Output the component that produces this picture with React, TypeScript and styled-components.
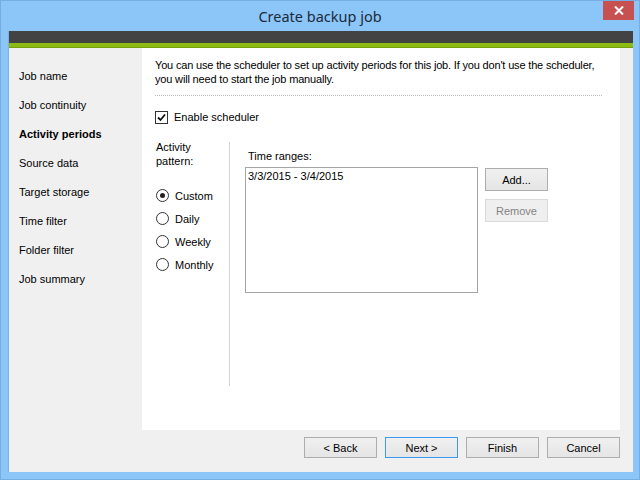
import styled, { createGlobalStyle, css } from 'styled-components';

const GlobalStyle = createGlobalStyle`
    html, body {
        margin: 0;
        padding: 0;
        width: 640px;
        height: 480px;
        overflow: hidden;
    }
    body {
        font-family: 'Liberation Sans', Arial, sans-serif;
        font-size: 11px;
        color: #000;
    }
`;

const Window = styled.div`
    box-sizing: border-box;
    width: 640px;
    height: 480px;
    background: #8cc6f8;
    border: 1px solid #74aee2;
    display: flex;
    flex-direction: column;
`;

const TitleBar = styled.div`
    position: relative;
    height: 30px;
    display: flex;
    align-items: center;
    justify-content: center;
    font-family: 'Noto Sans', 'Open Sans', sans-serif;
    font-size: 14.5px;
    color: #1b2a3a;
`;

const CloseButton = styled.div`
    position: absolute;
    top: 0;
    right: 5px;
    width: 31px;
    height: 19px;
    background: #c75050;
    display: flex;
    align-items: center;
    justify-content: center;
`;

const Client = styled.div`
    flex: 1;
    margin: 0 6px 7px 7px;
    border-left: 1px solid #79b2e6;
    display: flex;
    flex-direction: column;
    background: #f0f0f0;
`;

const DarkBand = styled.div`
    height: 12px;
    background: #434343;
`;

const GreenBand = styled.div`
    height: 4px;
    background: #8dbb14;
    border-bottom: 1px solid #76a00e;
`;

const Main = styled.div`
    flex: 1;
    display: flex;
    min-height: 0;
`;

const Sidebar = styled.div`
    width: 133px;
    padding: 14px 0 0 10px;
    box-sizing: border-box;
    display: flex;
    flex-direction: column;
`;

const NavItem = styled.div<{ $active?: boolean }>`
    height: 29px;
    line-height: 29px;
    ${({ $active }) =>
        $active &&
        css`
            font-weight: bold;
        `}
`;

const Content = styled.div`
    width: 478px;
    background: #fff;
    padding: 10px 18px 0 13px;
    box-sizing: border-box;
    display: flex;
    flex-direction: column;
`;

const Intro = styled.p`
    margin: 0;
    line-height: 14px;
    letter-spacing: -0.17px;
`;

const Separator = styled.div`
    margin-top: 9px;
    border-top: 1px dotted #b8b8b8;
`;

const CheckRow = styled.label`
    display: flex;
    align-items: center;
    gap: 6px;
    margin-top: 14px;
    height: 14px;
`;

const CheckBox = styled.span`
    width: 11px;
    height: 11px;
    border: 1px solid #333;
    background: #fff;
    display: flex;
    align-items: center;
    justify-content: center;
`;

const Schedule = styled.div`
    display: flex;
    margin-top: 18px;
`;

const PatternColumn = styled.div`
    width: 75px;
    height: 244px;
    border-right: 1px solid #d4d4d4;
    padding-left: 1px;
    box-sizing: border-box;
`;

const PatternLabel = styled.div`
    line-height: 14px;
    margin-top: -2px;
`;

const RadioList = styled.div`
    margin-top: 16px;
    display: flex;
    flex-direction: column;
`;

const RadioRow = styled.label`
    display: flex;
    align-items: center;
    gap: 6px;
    height: 23px;
`;

const RadioCircle = styled.span<{ $checked?: boolean }>`
    width: 11px;
    height: 11px;
    border: 1px solid #333;
    border-radius: 50%;
    background: #fff;
    display: flex;
    align-items: center;
    justify-content: center;

    ${({ $checked }) =>
        $checked &&
        css`
            &::after {
                content: '';
                width: 5px;
                height: 5px;
                border-radius: 50%;
                background: #222;
            }
        `}
`;

const RangesColumn = styled.div`
    padding-left: 15px;
    display: flex;
    flex-direction: column;
`;

const RangesLabel = styled.div`
    line-height: 14px;
    margin: 7px 0 4px 3px;
`;

const RangesRow = styled.div`
    display: flex;
    gap: 7px;
    align-items: flex-start;
`;

const ListBox = styled.div`
    width: 233px;
    height: 126px;
    box-sizing: border-box;
    border: 1px solid #a5a5a5;
    padding: 1px 2px;
    line-height: 14px;
`;

const ButtonStack = styled.div`
    display: flex;
    flex-direction: column;
    gap: 8px;
    padding-top: 1px;
`;

const Button = styled.button<{ $primary?: boolean; $width?: number; $height?: number }>`
    width: ${({ $width }) => $width ?? 73}px;
    height: ${({ $height }) => $height ?? 21}px;
    box-sizing: border-box;
    font-family: 'Liberation Sans', Arial, sans-serif;
    font-size: 11px;
    color: #000;
    border: 1px solid ${({ $primary }) => ($primary ? '#3c9af0' : '#adadad')};
    background: linear-gradient(#f0f0f0, #e5e5e5);
    padding: 0;

    &:disabled {
        color: #838383;
        border-color: #d9d9d9;
        background: #efefef;
    }
`;

const Gutter = styled.div`
    flex: 1;
`;

const Footer = styled.div`
    height: 42px;
    display: flex;
    align-items: flex-start;
    justify-content: flex-end;
    gap: 8px;
    padding: 7px 13px 0 0;
    box-sizing: border-box;
`;

export default function App() {
    const steps = [
        'Job name',
        'Job continuity',
        'Activity periods',
        'Source data',
        'Target storage',
        'Time filter',
        'Folder filter',
        'Job summary',
    ];

    return (
        <>
            <GlobalStyle />
            <Window>
                <TitleBar>
                    Create backup job
                    <CloseButton>
                        <svg width="10" height="9" viewBox="0 0 10 9">
                            <path d="M1 0.5 L9 8.5 M9 0.5 L1 8.5" stroke="#fff" strokeWidth="2" />
                        </svg>
                    </CloseButton>
                </TitleBar>
                <Client>
                    <DarkBand />
                    <GreenBand />
                    <Main>
                        <Sidebar>
                            {steps.map(step => (
                                <NavItem key={step} $active={step === 'Activity periods'}>
                                    {step}
                                </NavItem>
                            ))}
                        </Sidebar>
                        <Content>
                            <Intro>
                                You can use the scheduler to set up activity periods for this job. If
                                you don't use the scheduler, you will need to start the job manually.
                            </Intro>
                            <Separator />
                            <CheckRow>
                                <CheckBox>
                                    <svg width="9" height="9" viewBox="0 0 9 9">
                                        <path
                                            d="M1 4.5 L3.5 7 L8 1.5"
                                            stroke="#111"
                                            strokeWidth="1.8"
                                            fill="none"
                                        />
                                    </svg>
                                </CheckBox>
                                Enable scheduler
                            </CheckRow>
                            <Schedule>
                                <PatternColumn>
                                    <PatternLabel>
                                        Activity
                                        <br />
                                        pattern:
                                    </PatternLabel>
                                    <RadioList>
                                        {['Custom', 'Daily', 'Weekly', 'Monthly'].map(p => (
                                            <RadioRow key={p}>
                                                <RadioCircle $checked={p === 'Custom'} />
                                                {p}
                                            </RadioRow>
                                        ))}
                                    </RadioList>
                                </PatternColumn>
                                <RangesColumn>
                                    <RangesLabel>Time ranges:</RangesLabel>
                                    <RangesRow>
                                        <ListBox>3/3/2015 - 3/4/2015</ListBox>
                                        <ButtonStack>
                                            <Button $width={63} $height={23}>
                                                Add...
                                            </Button>
                                            <Button $width={63} $height={23} disabled>
                                                Remove
                                            </Button>
                                        </ButtonStack>
                                    </RangesRow>
                                </RangesColumn>
                            </Schedule>
                        </Content>
                        <Gutter />
                    </Main>
                    <Footer>
                        <Button>&lt; Back</Button>
                        <Button $primary>Next &gt;</Button>
                        <Button>Finish</Button>
                        <Button>Cancel</Button>
                    </Footer>
                </Client>
            </Window>
        </>
    );
}
